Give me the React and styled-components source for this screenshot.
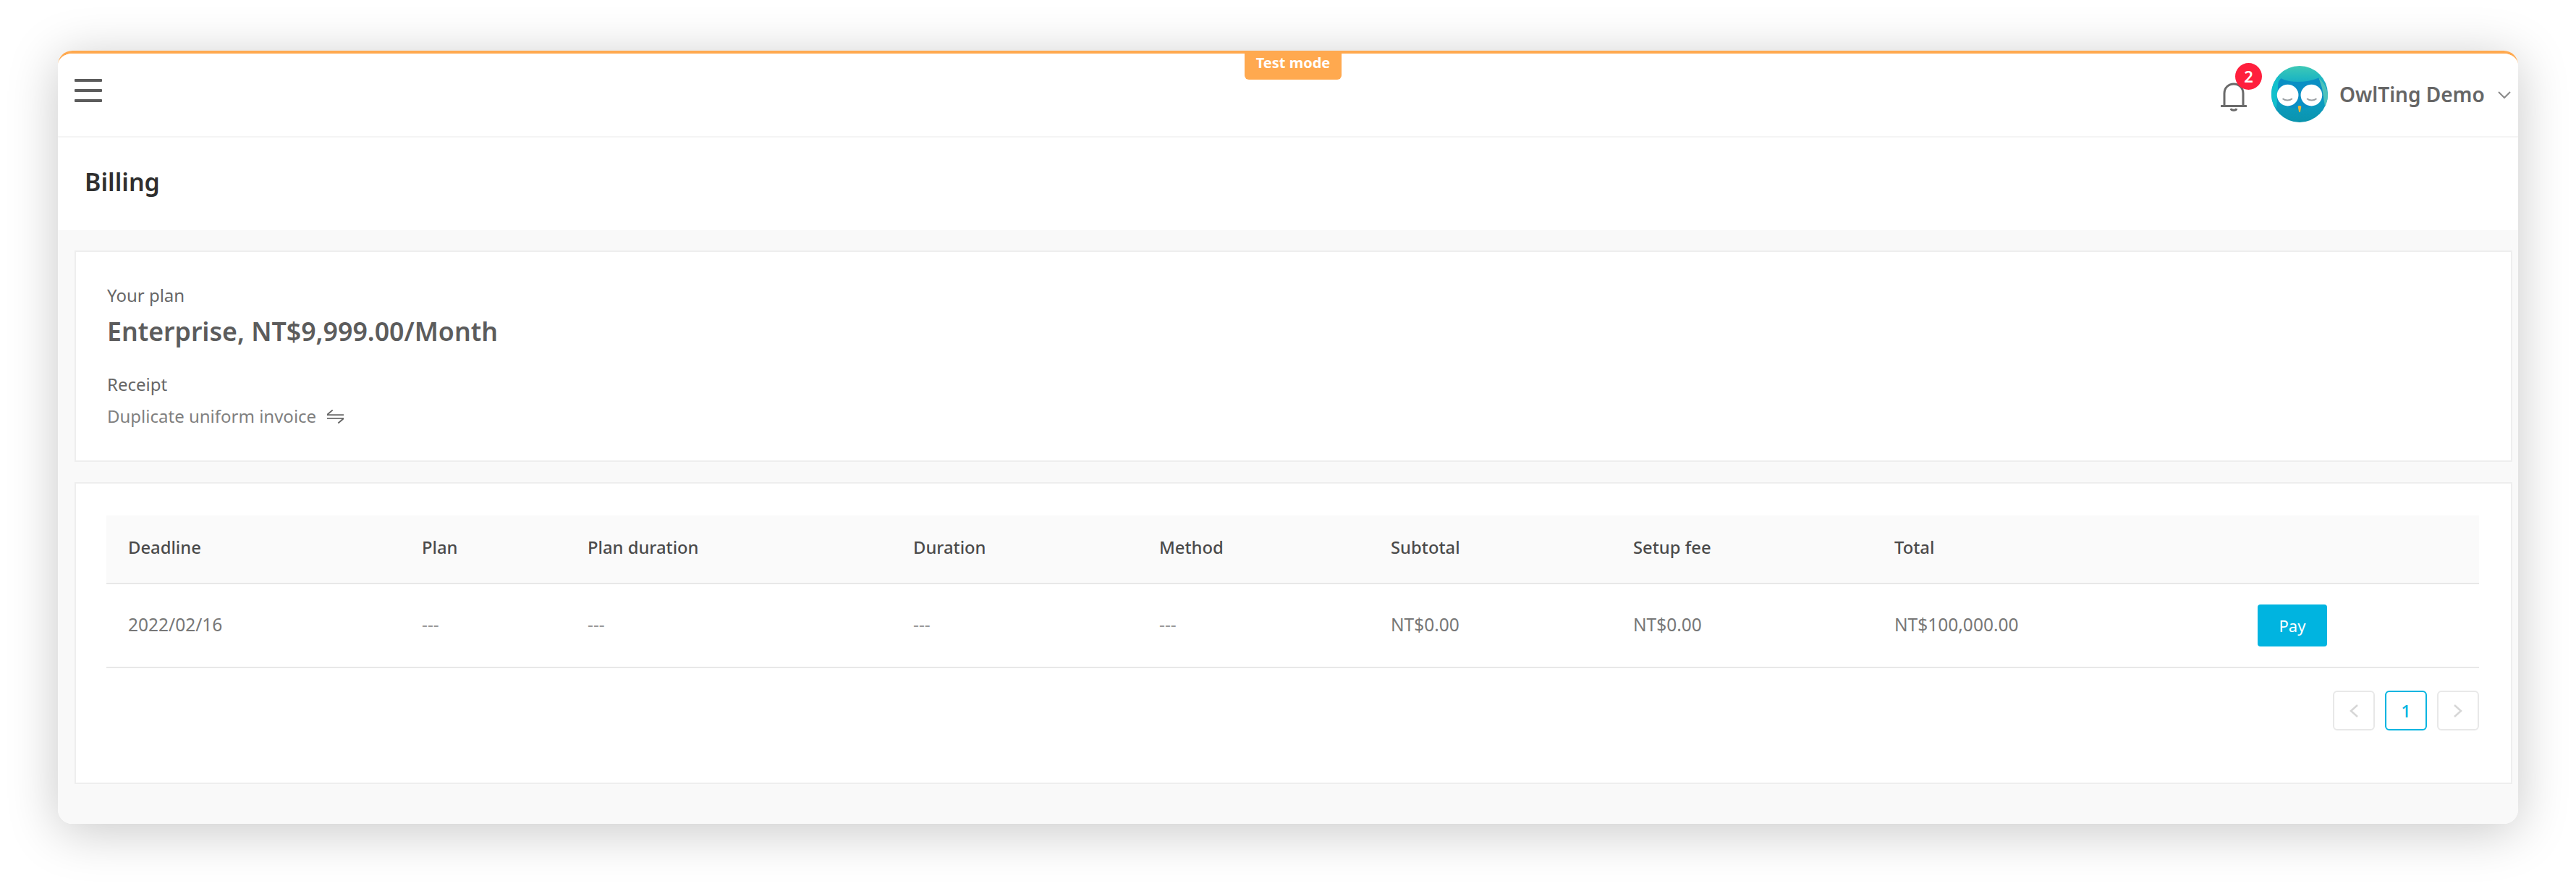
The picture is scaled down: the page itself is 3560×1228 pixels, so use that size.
import React from 'react'
import styled, { createGlobalStyle } from 'styled-components'

const GlobalStyle = createGlobalStyle`
  html, body {
    margin: 0;
    padding: 0;
    background: #fff;
  }
  * {
    box-sizing: border-box;
  }
`

const Page = styled.div`
  width: 3560px;
  height: 1228px;
  padding: 70px 80px 90px 80px;
  font-family: 'Noto Sans', sans-serif;
  overflow: hidden;
`

const Win = styled.div`
  position: relative;
  height: 1068px;
  display: flex;
  flex-direction: column;
  background: #f9f9f9;
  border-top: 4px solid #ffa94f;
  border-radius: 20px;
  overflow: hidden;
`

const Shadow = styled.div`
  border-radius: 20px;
  box-shadow: 0 10px 70px rgba(0, 0, 0, 0.22);
`

const TestTag = styled.div`
  position: absolute;
  top: 0;
  left: 1640px;
  width: 134px;
  height: 36px;
  background: #ffa94f;
  color: #fff;
  font-size: 20px;
  font-weight: 700;
  text-align: center;
  line-height: 26px;
  border-radius: 0 0 6px 6px;
`

const Header = styled.header`
  height: 116px;
  flex: none;
  display: flex;
  align-items: center;
  justify-content: space-between;
  padding: 0 10px 0 23px;
  background: #fff;
  border-bottom: 2px solid #f4f4f4;
`

const Burger = styled.div`
  width: 38px;
  display: flex;
  flex-direction: column;
  gap: 10px;
  margin-bottom: 12px;
  span {
    display: block;
    height: 4px;
    background: #5c5c5c;
    border-radius: 1px;
  }
`

const UserBox = styled.div`
  display: flex;
  align-items: center;
  margin-bottom: 2px;
`

const BellWrap = styled.div`
  position: relative;
  width: 36px;
  height: 42px;
  margin-right: 34px;
  margin-top: 6px;
`

const Badge = styled.div`
  position: absolute;
  top: -25px;
  left: 20px;
  width: 37px;
  height: 37px;
  border-radius: 50%;
  background: #ff1f3d;
  color: #fff;
  font-size: 22px;
  font-weight: 600;
  line-height: 37px;
  text-align: center;
`

const Avatar = styled.svg`
  width: 78px;
  height: 78px;
  margin-right: 16px;
  flex: none;
`

const UserName = styled.div`
  width: 219px;
  font-size: 28px;
  font-weight: 600;
  color: #666;
  white-space: nowrap;
`

const Caret = styled.svg`
  width: 18px;
  height: 11px;
  margin-top: 2px;
`

const TitleBar = styled.div`
  height: 128px;
  flex: none;
  display: flex;
  align-items: center;
  padding-left: 37px;
  background: #fff;
`

const Title = styled.h1`
  margin: 0 0 6px;
  font-size: 34px;
  font-weight: 600;
  color: #2f2f2f;
`

const Content = styled.main`
  flex: 1;
  display: flex;
  flex-direction: column;
  gap: 28px;
  padding: 28px 8px 0 23px;
`

const Card = styled.section`
  background: #fff;
  border: 2px solid #eeeeee;
`

const PlanCard = styled(Card)`
  height: 292px;
  padding: 44px 43px 0;
`

const Label = styled.div`
  font-size: 24px;
  line-height: 32px;
  color: #666;
`

const PlanName = styled.div`
  margin: 10px 0 35px;
  font-size: 35.7px;
  line-height: 46px;
  font-weight: 600;
  color: #5c5c5c;
`

const ReceiptRow = styled.div`
  display: flex;
  align-items: center;
  gap: 15px;
  margin-top: 12px;
  font-size: 24px;
  line-height: 32px;
  color: #808080;
`

const TableCard = styled(Card)`
  height: 417px;
  padding: 44px 44px 0 42px;
`

const Table = styled.table`
  width: 1px;
  table-layout: fixed;
  border-collapse: collapse;
`

const Th = styled.th`
  width: ${(p) => p.$w}px;
  height: 94px;
  padding: 0 0 6px 30px;
  background: #fafafa;
  border-bottom: 2px solid #e8e8e8;
  text-align: left;
  font-size: 23.8px;
  font-weight: 500;
  color: #4a4a4a;
  white-space: nowrap;
`

const Td = styled.td`
  height: 116px;
  padding: 0 0 3px 30px;
  border-bottom: 2px solid #e8e8e8;
  font-size: 24.5px;
  color: ${(p) => (p.$empty ? '#999' : '#777')};
  white-space: nowrap;
`

const PayButton = styled.button`
  display: block;
  width: 96px;
  height: 58px;
  margin-top: 3px;
  border: none;
  border-radius: 4px;
  background: #00b4e0;
  color: #fff;
  font-family: inherit;
  font-size: 22px;
`

const Pager = styled.nav`
  display: flex;
  justify-content: flex-end;
  gap: 14px;
  margin-top: 31px;
`

const PageBtn = styled.div`
  width: 58px;
  height: 55px;
  display: flex;
  align-items: center;
  justify-content: center;
  background: #fff;
  border: 2px solid ${(p) => (p.$active ? '#00b4e0' : '#e8e8e8')};
  border-radius: 6px;
  color: #00b4e0;
  font-size: 24px;
  font-weight: 500;
`

function Bell() {
  return (
    <svg width="36" height="42" viewBox="0 0 36 42" fill="none" stroke="#6a6a6a" strokeWidth="3">
      <path d="M5 34 V17 C5 9 11 4 18 4 C25 4 31 9 31 17 V34" />
      <path d="M1 34.5 H35" strokeLinecap="round" />
      <path d="M14 38 C15 41 21 41 22 38" />
    </svg>
  )
}

function Owl() {
  return (
    <Avatar viewBox="0 0 100 100">
      <defs>
        <linearGradient id="owlBody" x1="0" y1="0" x2="0" y2="1">
          <stop offset="0" stopColor="#3fc9b6" />
          <stop offset="0.2" stopColor="#22b9c0" />
          <stop offset="0.45" stopColor="#0d9fcb" />
          <stop offset="1" stopColor="#0a94ad" />
        </linearGradient>
      </defs>
      <circle cx="50" cy="50" r="50" fill="url(#owlBody)" />
      <path d="M17 22 C35 31 62 30 84 21 C92 32 94 46 92 58 C75 80 30 82 8 60 C6 46 9 32 17 22 Z" fill="#0a8fc4" />
      <path d="M0 50 C0 38 4 28 13 17 L9 76 C3 68 0 60 0 50 Z" fill="#12c0cc" />
      <path d="M84 21 C95 32 100 42 100 52 C100 60 98 66 95 72 L90 40 Z" fill="#4cc2bb" />
      <circle cx="29" cy="52" r="19" fill="#fff" />
      <circle cx="71" cy="52" r="19" fill="#fff" />
      <path d="M20 58 C25 62 32 62 37 58 M63 58 C68 62 75 62 80 58" stroke="#9a9fa3" strokeWidth="2.5" fill="none" />
      <path d="M47 72 C48 70 52 70 53 72 L51 82 H49 Z" fill="#f2b634" />
    </Avatar>
  )
}

function Swap() {
  return (
    <svg width="23" height="20" viewBox="0 0 24 20" fill="none" stroke="#666" strokeWidth="2">
      <path d="M0 8 H24 M0 8 L8 1" />
      <path d="M0 13 H24 M24 13 L16 20" />
    </svg>
  )
}

function Chevron({ dir }) {
  return (
    <svg width="14" height="20" viewBox="0 0 14 20" fill="none" stroke="#d6d6d6" strokeWidth="2.5">
      <path d={dir === 'left' ? 'M12 2 L3 10 L12 18' : 'M2 2 L11 10 L2 18'} />
    </svg>
  )
}

const columns = [
  { name: 'Deadline', w: 406, value: '2022/02/16' },
  { name: 'Plan', w: 229, value: '---' },
  { name: 'Plan duration', w: 450, value: '---' },
  { name: 'Duration', w: 340, value: '---' },
  { name: 'Method', w: 320, value: '---' },
  { name: 'Subtotal', w: 335, value: 'NT$0.00' },
  { name: 'Setup fee', w: 361, value: 'NT$0.00' },
  { name: 'Total', w: 502, value: 'NT$100,000.00' },
]

export default function App() {
  return (
    <Page>
      <GlobalStyle />
      <Shadow>
        <Win>
          <TestTag>Test mode</TestTag>
          <Header>
            <Burger>
              <span />
              <span />
              <span />
            </Burger>
            <UserBox>
              <BellWrap>
                <Bell />
                <Badge>2</Badge>
              </BellWrap>
              <Owl />
              <UserName>OwlTing Demo</UserName>
              <Caret viewBox="0 0 18 11" fill="none" stroke="#8a8a8a" strokeWidth="2">
                <path d="M1 1 L9 9 L17 1" />
              </Caret>
            </UserBox>
          </Header>
          <TitleBar>
            <Title>Billing</Title>
          </TitleBar>
          <Content>
            <PlanCard>
              <Label>Your plan</Label>
              <PlanName>Enterprise, NT$9,999.00/Month</PlanName>
              <Label>Receipt</Label>
              <ReceiptRow>
                Duplicate uniform invoice
                <Swap />
              </ReceiptRow>
            </PlanCard>
            <TableCard>
              <Table>
                <thead>
                  <tr>
                    {columns.map((c) => (
                      <Th key={c.name} $w={c.w}>{c.name}</Th>
                    ))}
                    <Th $w={336} />
                  </tr>
                </thead>
                <tbody>
                  <tr>
                    {columns.map((c) => (
                      <Td key={c.name} $empty={c.value === '---'}>{c.value}</Td>
                    ))}
                    <Td>
                      <PayButton>Pay</PayButton>
                    </Td>
                  </tr>
                </tbody>
              </Table>
              <Pager>
                <PageBtn><Chevron dir="left" /></PageBtn>
                <PageBtn $active>1</PageBtn>
                <PageBtn><Chevron dir="right" /></PageBtn>
              </Pager>
            </TableCard>
          </Content>
        </Win>
      </Shadow>
    </Page>
  )
}
